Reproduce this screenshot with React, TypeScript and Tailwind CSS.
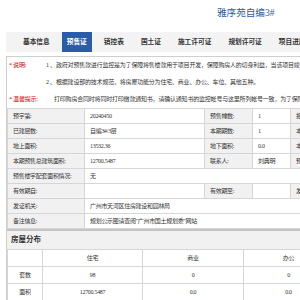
import React from 'react'

const tabs = ['基本信息', '预售证', '销控表', '国土证', '施工许可证', '规划许可证', '项目进度']

const label = 'bg-[#f1f1f1] border border-[#d6d6d6] pl-[5px] text-[6px] tracking-[-0.3px] leading-[8px] text-[#333] whitespace-nowrap'
const value = 'bg-white border border-[#d6d6d6] pl-[5px] text-[6px] tracking-[-0.3px] leading-[8px] text-[#333] whitespace-nowrap'
const cell = 'border border-[#d6d6d6] text-center text-[6px] tracking-[-0.3px] leading-[8px]'

export default function App() {
  return (
    <div
      className="w-[300px] h-[300px] overflow-hidden bg-white"
      style={{ fontFamily: '"Liberation Serif", "Noto Sans CJK SC", serif' }}
    >
      <div className="w-[520px]">
        {/* Title */}
        <div className="h-[28px] pl-[217px] pt-[6px] text-[9.6px] text-[#2d5da0] leading-[14px]">
          雅序苑自编3#
        </div>

        {/* Tabs */}
        <div className="ml-[6px] mt-[4px] h-[20px] bg-[#f3f3f3] flex items-stretch pl-[12px] gap-[7px]">
          {tabs.map((t, i) => (
            <div
              key={t}
              className={
                i === 1
                  ? 'px-[5px] flex items-center bg-[#2b5ca8] text-white text-[6.7px] font-bold'
                  : 'px-[5px] flex items-center text-[#333] text-[6.7px] font-bold'
              }
            >
              {t}
            </div>
          ))}
        </div>

        {/* Main box */}
        <div className="ml-[6px] mt-[4px] border-l border-t border-[#cfcfcf]">
          <div className="text-[6px] text-[#333] tracking-[-0.2px]">
            <div className="flex h-[17px] items-center">
              <span className="w-[39px] pl-[2px] text-[#d40000]">* 说明:</span>
              <span className="w-[10px]">1 、</span>
              <span className="whitespace-nowrap">
                政府对预售款进行监控是为了保障将售楼款用于项目开发，保障购房人的切身利益，当该项目竣工验收后，监控账户将解除监控。
              </span>
            </div>
            <div className="flex h-[17px] items-center">
              <span className="w-[39px]"></span>
              <span className="w-[10px]">2 、</span>
              <span className="whitespace-nowrap">根据建设部的技术规范，将房屋功能分为住宅、商业、办公、车位、其他五种。</span>
            </div>
            <div className="flex h-[17px] items-center">
              <span className="w-[47px] pl-[2px] text-[#d40000]">* 温馨提示:</span>
              <span className="whitespace-nowrap">
                打印购房合同时将同时打印缴款通知书，请确认通知书的监控帐号与这里所列帐号一致，为了保障您的利益，请勿将房款交给他人。
              </span>
            </div>
          </div>

          <table className="border-collapse table-fixed w-[514px]">
            <colgroup>
              <col className="w-[77px]" />
              <col className="w-[120px]" />
              <col className="w-[48px]" />
              <col className="w-[38px]" />
              <col className="w-[60px]" />
              <col className="w-[171px]" />
            </colgroup>
            <tbody>
              {[
                ['预字第:', '20240450', '预售幢数:', '1', '报建屋数:', '1'],
                ['已建层数:', '自编3#/3层', '本期期数:', '1', '本期屋数:', '1'],
                ['地上面积:', '13532.36', '地下面积:', '0.0', '本期预售面积:', '12700.5487'],
                ['本期预售总建筑面积:', '12700.5487', '联系人:', '刘典明', '预售证状态:', '有效'],
              ].map((r) => (
                <tr key={r[0]} className="h-[15px]">
                  <td className={label}>{r[0]}</td>
                  <td className={value}>{r[1]}</td>
                  <td className={label}>{r[2]}</td>
                  <td className={value}>{r[3]}</td>
                  <td className={label}>{r[4]}</td>
                  <td className={value}>{r[5]}</td>
                </tr>
              ))}
              <tr className="h-[15px]">
                <td className={label}>预售楼宇配套面积情况:</td>
                <td className={value} colSpan={5}>无</td>
              </tr>
              <tr className="h-[15px]">
                <td className={label}>有效期自:</td>
                <td className={value}></td>
                <td className={label}>有效期至:</td>
                <td className={value}></td>
                <td className={label}>发证日期:</td>
                <td className={value}></td>
              </tr>
              <tr className="h-[15px]">
                <td className={label}>发证机关:</td>
                <td className={value} colSpan={5}>广州市天河区住房建设和园林局</td>
              </tr>
              <tr className="h-[15px]">
                <td className={label}>备注信息:</td>
                <td className={value} colSpan={5}>规划公示图请查阅"广州市国土规划委"网站</td>
              </tr>
            </tbody>
          </table>

          {/* 房屋分布 */}
          <div className="border-t-2 border-[#c4c4c4] bg-[#f1f1f1] h-[20px] flex items-center pl-[4px] text-[7.5px] font-bold text-[#333]">
            房屋分布
          </div>
          <table className="border-collapse table-fixed w-[400px] text-[#333]">
            <colgroup>
              <col className="w-[35px]" />
              <col className="w-[100px]" />
              <col className="w-[101px]" />
              <col className="w-[90px]" />
              <col className="w-[74px]" />
            </colgroup>
            <tbody>
              <tr className="h-[17px]">
                <td className={cell}></td>
                <td className={cell}>住宅</td>
                <td className={cell}>商业</td>
                <td className={cell}>办公</td>
                <td className={cell}>车位</td>
              </tr>
              <tr className="h-[17px]">
                <td className={cell}>套数</td>
                <td className={cell}>98</td>
                <td className={cell}>0</td>
                <td className={cell}>0</td>
                <td className={cell}>0</td>
              </tr>
              <tr className="h-[17px]">
                <td className={cell}>面积</td>
                <td className={cell}>12700.5487</td>
                <td className={cell}>0.0</td>
                <td className={cell}>0.0</td>
                <td className={cell}>0.0</td>
              </tr>
            </tbody>
          </table>
        </div>
      </div>
    </div>
  )
}
